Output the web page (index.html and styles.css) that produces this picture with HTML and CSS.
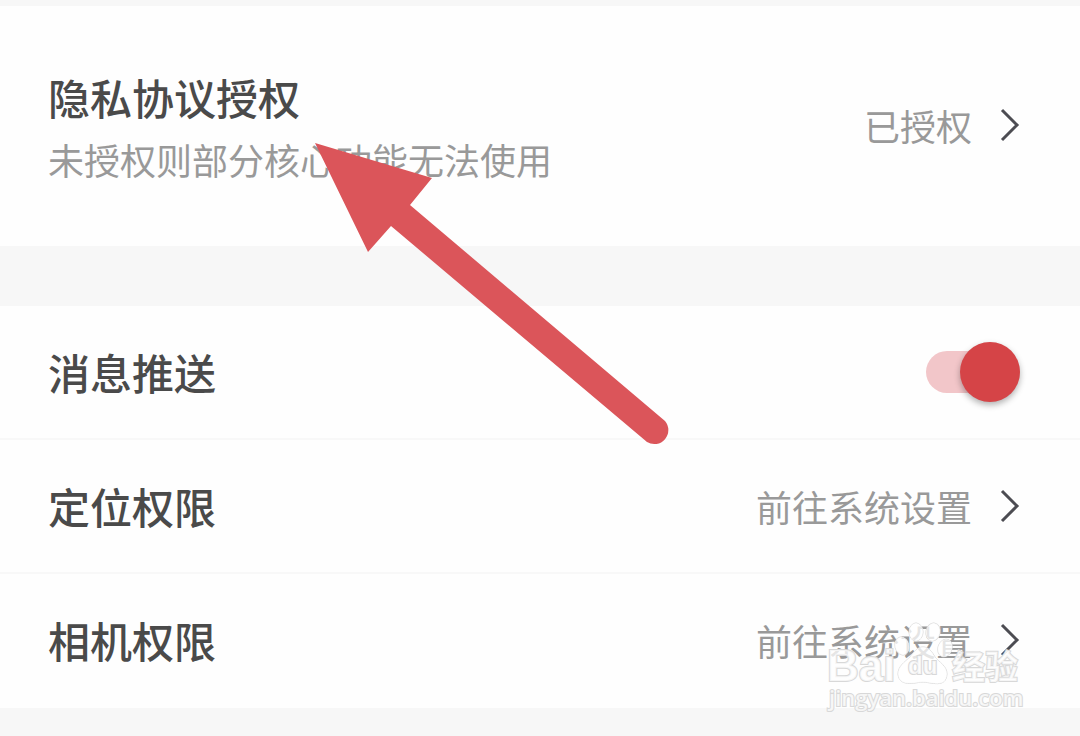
FILE: index.html
```html
<!DOCTYPE html>
<html lang="zh-CN">
<head>
  <meta charset="UTF-8">
  <meta name="viewport" content="width=device-width, initial-scale=1.0">
  <title>隐私设置</title>
  <link rel="stylesheet" href="styles.css">
</head>
<body>
  <main class="settings">
    <section class="group">
      <div class="row row-tall">
        <div class="row-text">
          <h2 class="title">隐私协议授权</h2>
          <p class="subtitle">未授权则部分核心功能无法使用</p>
        </div>
        <button class="action" type="button">
          已授权
          <svg class="chevron" viewBox="0 0 20 34" aria-hidden="true"><path d="M2 2 L17 17 L2 32"/></svg>
        </button>
      </div>
    </section>

    <section class="group">
      <div class="row">
        <label class="title" for="push">消息推送</label>
        <input class="switch" type="checkbox" id="push" checked>
      </div>
      <div class="row">
        <h2 class="title">定位权限</h2>
        <button class="action" type="button">
          前往系统设置
          <svg class="chevron" viewBox="0 0 20 34" aria-hidden="true"><path d="M2 2 L17 17 L2 32"/></svg>
        </button>
      </div>
      <div class="row">
        <h2 class="title">相机权限</h2>
        <button class="action" type="button">
          前往系统设置
          <svg class="chevron" viewBox="0 0 20 34" aria-hidden="true"><path d="M2 2 L17 17 L2 32"/></svg>
        </button>
      </div>
    </section>

    <svg class="arrow" viewBox="0 0 360 310" aria-hidden="true">
      <path d="M5 3 L122 38 L100 65 L355 281 A14 14 0 0 1 337 302 L81 86 L58 112 Z"/>
    </svg>

    <svg class="watermark" viewBox="0 0 200 100" aria-hidden="true">
      <text class="wm-latin" x="3" y="67">Bai</text>
      <g class="wm-paw">
        <ellipse cx="78" cy="32" rx="7" ry="9" transform="rotate(-15 78 32)"/>
        <ellipse cx="92" cy="18" rx="7" ry="9"/>
        <ellipse cx="109" cy="18" rx="7" ry="9" transform="rotate(12 109 18)"/>
        <ellipse cx="121" cy="34" rx="7" ry="9" transform="rotate(20 121 34)"/>
        <path d="M99 33 C93 33 90 38 86 43 C81 48 74 52 74 60 C75 73 90 69 98 68 C107 68 122 75 123 60 C123 52 115 48 111 43 C108 38 105 33 99 33 Z"/>
      </g>
      <text class="wm-du" x="84" y="60">du</text>
      <text class="wm-cjk" x="128" y="65">经验</text>
      <text class="wm-url" x="5" y="92">jingyan.baidu.com</text>
    </svg>
  </main>
</body>
</html>
```
FILE: styles.css
```css
* {
  box-sizing: border-box;
}

body {
  margin: 0;
  background-color: #f7f7f7;
  font-family: "Noto Sans CJK SC", "Noto Sans", sans-serif;
  color: #4a4a4a;
}

.settings {
  position: relative;
  display: flex;
  flex-direction: column;
  gap: 60px;
  padding: 6px 0 28px;
  overflow: hidden;
}

.group {
  background-color: #fefefe;
}

.row {
  display: flex;
  align-items: center;
  justify-content: space-between;
  min-height: 134px;
  padding: 0 60px 0 48px;
  border-bottom: 2px solid #f8f8f8;
}

.row:last-child {
  border-bottom-color: transparent;
}

.row-tall {
  min-height: 240px;
}

.row-text {
  display: flex;
  flex-direction: column;
  gap: 8px;
}

.title {
  margin: 0;
  font-size: 42px;
  font-weight: 500;
  line-height: 60px;
}

.subtitle {
  margin: 0;
  font-size: 36px;
  line-height: 48px;
  color: #999;
}

.action {
  display: flex;
  align-items: center;
  gap: 28px;
  padding: 0;
  border: none;
  background: none;
  font-family: inherit;
  font-size: 36px;
  line-height: 48px;
  color: #999;
  cursor: pointer;
}

.chevron {
  width: 20px;
  height: 34px;
  fill: none;
  stroke: #4c4c52;
  stroke-width: 3;
}

.switch {
  appearance: none;
  position: relative;
  width: 94px;
  height: 60px;
  margin: 0;
  cursor: pointer;
}

/* track */
.switch::before {
  content: '';
  position: absolute;
  inset: 9px 0;
  border-radius: 21px;
  background-color: #f2c6c9;
}

/* knob */
.switch::after {
  content: '';
  position: absolute;
  top: 0;
  left: 0;
  width: 60px;
  height: 60px;
  border-radius: 50%;
  background-color: #d54447;
  box-shadow: 0 3px 6px rgba(0, 0, 0, 0.3);
}

.switch:checked::after {
  left: auto;
  right: 0;
}

.arrow {
  position: absolute;
  top: 140px;
  left: 310px;
  width: 360px;
  height: 310px;
  fill: #db555a;
  pointer-events: none;
}

.watermark {
  position: absolute;
  right: 56px;
  bottom: 22px;
  width: 200px;
  height: 100px;
  fill: #fff;
  fill-opacity: 0.75;
  stroke: #d8d8d8;
  stroke-width: 2;
  paint-order: stroke;
  pointer-events: none;
}

.wm-paw {
  stroke-width: 1;
}

.wm-latin {
  font: bold 44px "Liberation Sans", sans-serif;
}

.wm-du {
  font: bold 24px "Liberation Sans", sans-serif;
}

.wm-cjk {
  font: bold 33px "Noto Sans CJK SC", sans-serif;
}

.wm-url {
  font: 600 22px "Open Sans", sans-serif;
}
```
